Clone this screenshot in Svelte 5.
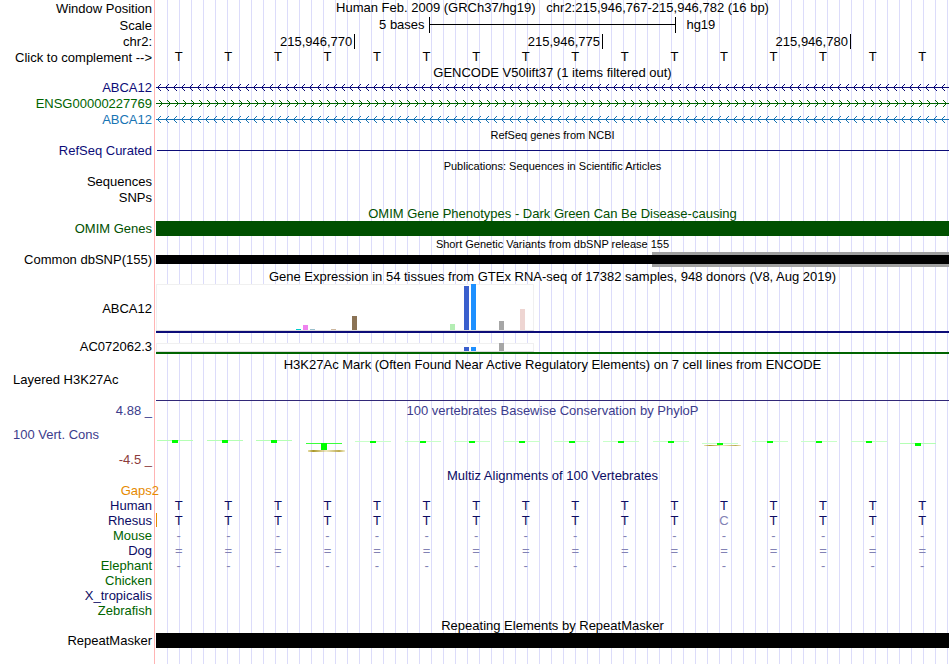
<!-- Genome browser image: label column on the left, stacked tracks on the right -->
<script lang="ts">
  interface Bar {
    tissue: number;
    height: number;
    color: string;
  }

  interface Score {
    y: number;
    height: number;
    line: string;
    smear?: number;
  }

  const columns = Array.from({ length: 16 }, (_, i) => i);

  const coordinates = [
    { text: "215,946,770", span: 4 },
    { text: "215,946,775", span: 5 },
    { text: "215,946,780", span: 5 },
  ];

  const genes = [
    { name: "ABCA12", color: "#0c0c78", forward: false },
    { name: "ENSG00000227769", color: "#006400", forward: true },
    { name: "ABCA12", color: "#1874b4", forward: false },
  ];

  // one slot of 7px per tissue, 54 tissues
  const abcaBars: Bar[] = [
    { tissue: 20, height: 1, color: "#00cdcd" },
    { tissue: 21, height: 5, color: "#ee82ee" },
    { tissue: 22, height: 1, color: "#9ac0cd" },
    { tissue: 25, height: 1, color: "#cdb79e" },
    { tissue: 28, height: 14, color: "#8b7355" },
    { tissue: 42, height: 6, color: "#b4eeb4" },
    { tissue: 44, height: 44, color: "#3a5fcd" },
    { tissue: 45, height: 46, color: "#1e90ff" },
    { tissue: 49, height: 9, color: "#a6a6a6" },
    { tissue: 52, height: 21, color: "#eed5d2" },
  ];

  const acBars: Bar[] = [
    { tissue: 44, height: 4, color: "#3a5fcd" },
    { tissue: 45, height: 4, color: "#1e90ff" },
    { tissue: 49, height: 8, color: "#a6a6a6" },
  ];

  const high: Score = { y: 22, height: 3, line: "#b4ffb4" };
  const mid: Score = { y: 23, height: 2, line: "#c8ffc8" };
  const scores: Score[] = [
    high,
    high,
    high,
    { y: 25, height: 7, line: "#3cff3c", smear: 32 },
    mid,
    mid,
    mid,
    mid,
    mid,
    mid,
    mid,
    { y: 25, height: 2, line: "#c8ffc8", smear: 27 },
    mid,
    mid,
    mid,
    { y: 25, height: 3, line: "#b4ffb4" },
  ];

  const species = [
    { name: "Human", kind: "blue", bases: "TTTTTTTTTTTTTTTT" },
    { name: "Rhesus", kind: "blue", bases: "TTTTTTTTTTTCTTTT" },
    { name: "Mouse", kind: "green", bases: "----------------" },
    { name: "Dog", kind: "blue", bases: "================" },
    { name: "Elephant", kind: "green", bases: "----------------" },
    { name: "Chicken", kind: "green", bases: "" },
    { name: "X_tropicalis", kind: "blue", bases: "" },
    { name: "Zebrafish", kind: "green", bases: "" },
  ];
</script>

{#snippet expression(bars: Bar[], height: number)}
  <svg class="chart" width="378" height={height + 1} shape-rendering="crispEdges">
    <rect width="378" height={height + 1} fill="#fff" />
    <path d="M0 .5H377.5V{height}M.5 0V{height}" fill="none" stroke="#f0f0f0" />
    <rect y={height} width="378" height="1" fill="#dcdcdc" />
    {#each bars as bar}
      <rect x={bar.tissue * 7} y={height - bar.height} width="5" height={bar.height} fill={bar.color} />
    {/each}
  </svg>
{/snippet}

<main class="browser">
  <div class="row spaced">
    <div class="label">Window Position</div>
    <div class="title">Human Feb. 2009 (GRCh37/hg19) &nbsp; chr2:215,946,767-215,946,782 (16 bp)</div>
  </div>
  <div class="row spaced">
    <div class="label">Scale</div>
    <div class="scale">
      <span class="length">5 bases</span>
      <span class="bracket"></span>
      <span class="assembly">hg19</span>
    </div>
  </div>
  <div class="row">
    <div class="label">chr2:</div>
    <div class="bases">
      {#each coordinates as c}
        <span class="coordinate" style="grid-column: span {c.span}">{c.text}</span>
      {/each}
    </div>
  </div>
  <div class="row item">
    <div class="label"><button type="button">Click to complement --&gt;</button></div>
    <div class="bases">
      {#each columns as i (i)}
        <span class="base">T</span>
      {/each}
    </div>
  </div>

  <div class="row">
    <div class="title">GENCODE V50lift37 (1 items filtered out)</div>
  </div>
  {#each genes as gene, i}
    <div class="row item" style="color: {gene.color}">
      <div class="label">{gene.name}</div>
      <svg class="strand" width="100%" height="16">
        <defs>
          <pattern id="strand-{i}" width="8" height="16" patternUnits="userSpaceOnUse">
            <path
              d={gene.forward ? "M3 4L6.5 7.5L3 11" : "M5 4L1.5 7.5L5 11"}
              fill="none"
              stroke="currentColor"
            />
          </pattern>
        </defs>
        <rect y="7" width="100%" height="1" fill="currentColor" />
        <rect width="100%" height="16" fill="url(#strand-{i})" />
      </svg>
    </div>
  {/each}

  <div class="row">
    <div class="title small">RefSeq genes from NCBI</div>
  </div>
  <div class="row item navy">
    <div class="label">RefSeq Curated</div>
    <div class="refseq"></div>
  </div>

  <div class="row">
    <div class="title small">Publications: Sequences in Scientific Articles</div>
  </div>
  <div class="row item"><div class="label">Sequences</div></div>
  <div class="row item"><div class="label">SNPs</div></div>

  <div class="row omim">
    <div class="title">OMIM Gene Phenotypes - Dark Green Can Be Disease-causing</div>
  </div>
  <div class="row omim">
    <div class="label">OMIM Genes</div>
    <div class="block"></div>
  </div>

  <div class="row item">
    <div class="title small">Short Genetic Variants from dbSNP release 155</div>
  </div>
  <div class="row">
    <div class="label">Common dbSNP(155)</div>
    <div class="variants"><div class="block"></div></div>
  </div>

  <div class="row header">
    <div class="title">Gene Expression in 54 tissues from GTEx RNA-seq of 17382 samples, 948 donors (V8, Aug 2019)</div>
  </div>
  <div class="row gene-chart abca">
    <div class="label">ABCA12</div>
    <div class="plot">{@render expression(abcaBars, 46)}</div>
  </div>
  <div class="row gene-chart ac">
    <div class="label">AC072062.3</div>
    <div class="plot">{@render expression(acBars, 8)}</div>
  </div>

  <div class="row header histone-header">
    <div class="title">H3K27Ac Mark (Often Found Near Active Regulatory Elements) on 7 cell lines from ENCODE</div>
  </div>
  <div class="row">
    <div class="label left">Layered H3K27Ac</div>
    <div class="histone"></div>
  </div>

  <div class="row header phylo">
    <div class="label">4.88 _</div>
    <div class="title">100 vertebrates Basewise Conservation by PhyloP</div>
  </div>
  <div class="row phylo">
    <div class="label range">
      <span class="name">100 Vert. Cons</span>
      <span class="low">-4.5 _</span>
    </div>
    <svg class="scores" width="100%" height="50" shape-rendering="crispEdges">
      <defs>
        <linearGradient id="smear">
          <stop offset="0" stop-color="#c8b43c" stop-opacity="0.4" />
          <stop offset="0.15" stop-color="#a89628" />
          <stop offset="0.5" stop-color="#c8b43c" stop-opacity="0.3" />
          <stop offset="0.85" stop-color="#b4a03c" stop-opacity="0.9" />
          <stop offset="1" stop-color="#c8b43c" stop-opacity="0.3" />
        </linearGradient>
      </defs>
      {#each scores as score, i}
        <svg x="{i * 6.25}%" width="48" height="50">
          <rect x="1" y={score.y} width="36" height="1" fill={score.line} />
          <rect x="16" y={score.y} width="6" height={score.height} fill="#00ff00" />
          {#if score.smear}
            <rect x="3" y={score.smear} width="37" height={score.smear > 30 ? 2 : 1} fill="url(#smear)" />
          {/if}
        </svg>
      {/each}
    </svg>
  </div>

  <div class="row blue">
    <div class="title">Multiz Alignments of 100 Vertebrates</div>
  </div>
  <div class="row gaps"><div class="label">Gaps2</div></div>
  {#each species as s (s.name)}
    <div class="row {s.kind}">
      <div class="label">{s.name}</div>
      <div class="bases" class:insert={s.name === "Rhesus"}>
        {#each s.bases as base}
          <span class="base aligned" class:faint={base !== "T"}>{base}</span>
        {/each}
      </div>
    </div>
  {/each}

  <div class="row">
    <div class="title">Repeating Elements by RepeatMasker</div>
  </div>
  <div class="row">
    <div class="label">RepeatMasker</div>
    <div class="block"></div>
  </div>
</main>

<style>
  :global(body) {
    background: #fff;
  }

  .browser {
    box-sizing: border-box;
    min-height: 100vh;
    padding: 0 1px 16px 0;
    overflow: hidden;
    color: #000;
    font: 13px/15px "Liberation Sans", Arial, Helvetica, sans-serif;
    white-space: nowrap;
    /* red divider, white label column, vertical guide lines */
    background:
      linear-gradient(#ffb4b4, #ffb4b4) 154px 0 / 1px 100% no-repeat,
      linear-gradient(#fff, #fff) 0 0 / 156px 100% no-repeat,
      repeating-linear-gradient(to right, transparent 0 11px, #dcdcfa 11px 12px);
  }

  .row {
    display: grid;
    grid-template-columns: 156px 1fr;
    min-height: 15px;
  }

  .item {
    min-height: 16px;
    line-height: 16px;
  }

  .spaced {
    min-height: 17px;
    line-height: 16px;
  }

  .spaced .label {
    padding-top: 1px;
  }

  .header {
    min-height: 17px;
    align-items: end;
  }

  .histone-header {
    min-height: 18px;
  }

  .label {
    padding-right: 4px;
    text-align: right;
  }

  .left {
    padding-left: 13px;
    text-align: left;
  }

  button {
    display: block;
    margin-left: auto;
    padding: 1px 0 0;
    border: 0;
    background: none;
    color: inherit;
    font: inherit;
    line-height: 15px;
    cursor: pointer;
  }

  .title {
    grid-column: 2;
    text-align: center;
  }

  .small {
    font-size: 11px;
  }

  .scale {
    display: grid;
    grid-template-columns: 1fr 31.25% 1fr;
    height: 16px;
  }

  .length {
    padding-right: 4px;
    text-align: right;
  }

  .assembly {
    padding-left: 10px;
  }

  .bracket {
    border: solid #000;
    border-width: 0 1px;
    background: linear-gradient(#000, #000) 0 7px / 100% 1px no-repeat;
  }

  .bases {
    display: grid;
    grid-template-columns: repeat(16, 1fr);
    line-height: 15px;
  }

  .coordinate {
    margin-right: -1px;
    padding-right: 2px;
    border-right: 1px solid #000;
    text-align: right;
  }

  .base {
    padding-right: 4px;
    text-align: center;
  }

  .aligned {
    color: #0c0c64;
  }

  .faint {
    color: #8282b4;
  }

  .insert {
    background: linear-gradient(#e68a00, #e68a00) 0 0 / 1px 14px no-repeat;
  }

  .strand,
  .scores,
  .chart {
    display: block;
  }

  .navy {
    color: #0c0c78;
  }

  .refseq {
    height: 1px;
    margin: 7px 0 0 1px;
    background: #0c0c78;
  }

  .omim {
    color: #005000;
  }

  .block {
    height: 15px;
    background: #000;
  }

  .omim .block {
    background: #005000;
  }

  .variants {
    display: flex;
    align-items: center;
    background: linear-gradient(to right, transparent 62.5%, #a0a0a0 62.5%);
  }

  .variants .block {
    flex: 1;
    height: 9px;
  }

  .gene-chart {
    align-items: end;
  }

  .plot {
    border-bottom: 2px solid #0c0c78;
  }

  .abca .label {
    align-self: center;
  }

  .ac {
    min-height: 21px;
  }

  .ac .plot {
    border-color: #006400;
  }

  .histone {
    height: 29px;
    box-sizing: border-box;
    border-bottom: 1px solid #322878;
  }

  .phylo {
    color: #3c3c8c;
  }

  .range {
    display: flex;
    flex-direction: column;
    justify-content: space-between;
    padding: 9px 4px 1px 13px;
  }

  .name {
    text-align: left;
  }

  .low {
    color: #8c3c3c;
  }

  .blue {
    color: #0c0c64;
  }

  .green {
    color: #006400;
  }

  .gaps {
    color: #e68a00;
  }

  .gaps .label {
    margin-right: -7px;
  }
</style>
